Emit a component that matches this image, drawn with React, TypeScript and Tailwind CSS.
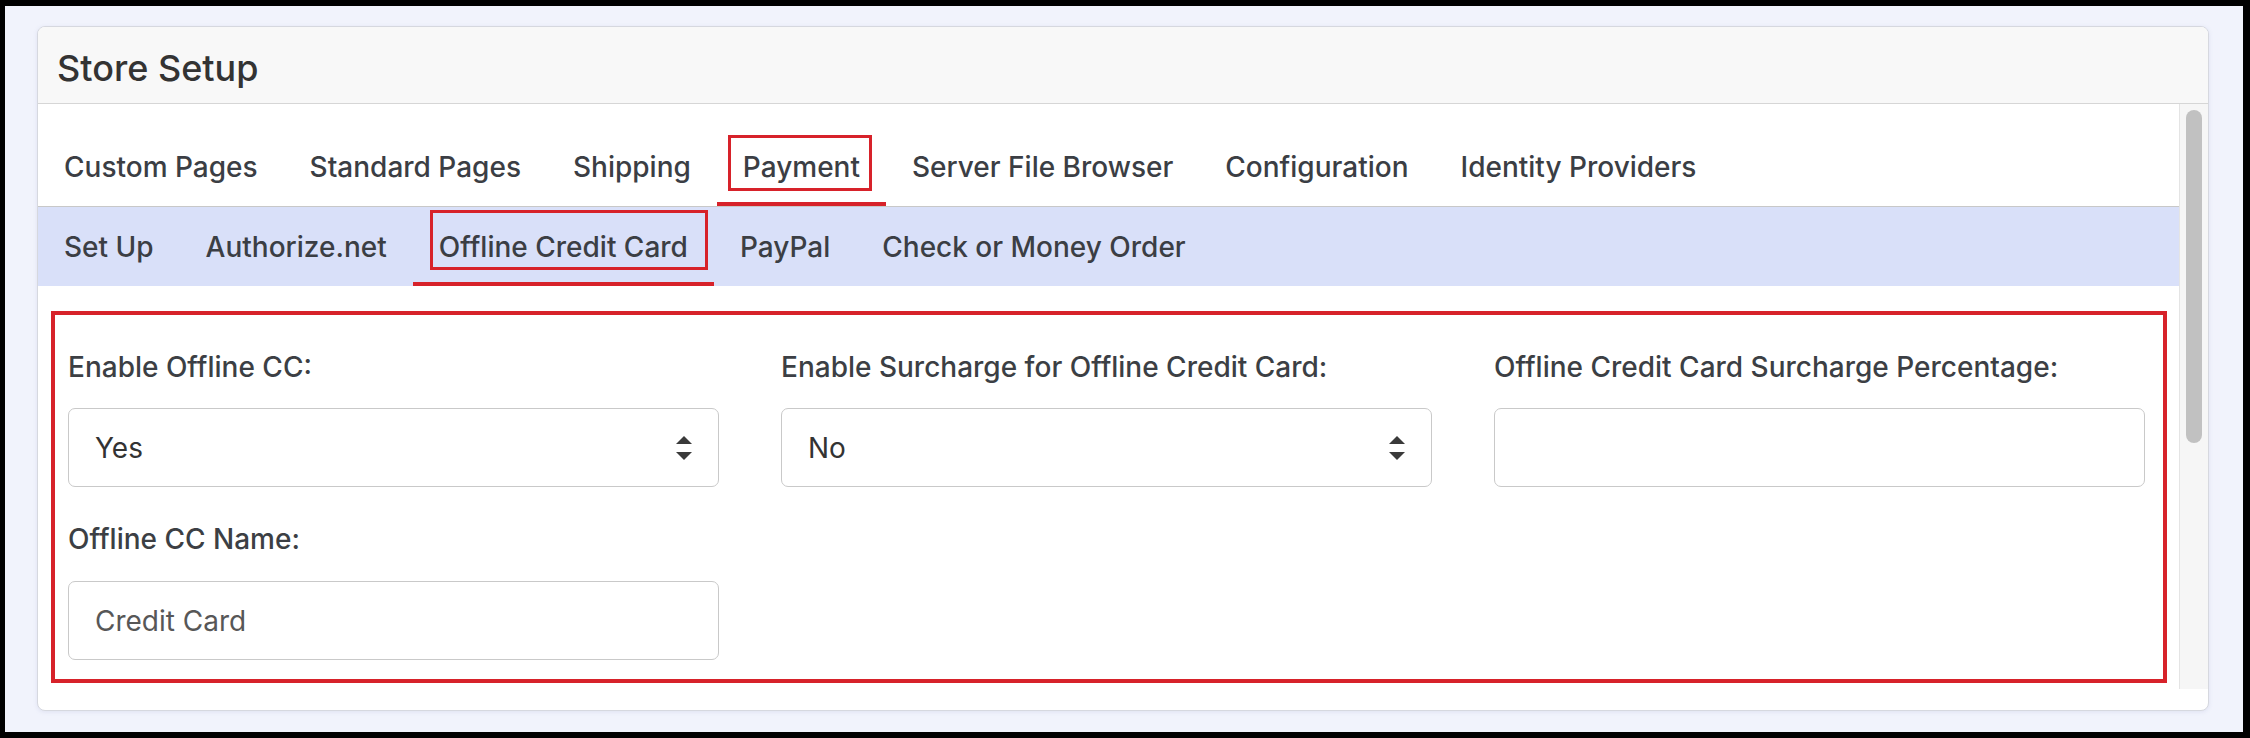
import React from 'react';

const mainTabs = ['Custom Pages', 'Standard Pages', 'Shipping', 'Payment', 'Server File Browser', 'Configuration', 'Identity Providers'];
const subTabs = ['Set Up', 'Authorize.net', 'Offline Credit Card', 'PayPal', 'Check or Money Order'];

function SelectArrows() {
  return (
    <svg width="16" height="24" viewBox="0 0 16 24" className="shrink-0">
      <polygon points="8,0 16,8 0,8" fill="#3a3a3a" />
      <polygon points="0,16 16,16 8,24" fill="#3a3a3a" />
    </svg>
  );
}

function Field({ label, children, gap = 'mb-[20px]' }: { label: string; children: React.ReactNode; gap?: string }) {
  return (
    <div className="flex flex-col">
      <label className={`text-[28px] leading-[42px] font-medium text-[#3c3f44] ${gap}`}>{label}</label>
      {children}
    </div>
  );
}

function SelectBox({ value }: { value: string }) {
  return (
    <div className="h-[79px] rounded-[7px] border border-[#c9c9c9] bg-white flex items-center justify-between pl-[26px] pr-[26px]">
      <span className="text-[28px] text-[#333]">{value}</span>
      <SelectArrows />
    </div>
  );
}

function InputBox({ value }: { value?: string }) {
  return (
    <div className="h-[79px] rounded-[7px] border border-[#c9c9c9] bg-white flex items-center pl-[26px]">
      <span className="text-[28px] text-[#575757]">{value}</span>
    </div>
  );
}

export default function App() {
  return (
    <div className="w-[2250px] h-[738px] bg-black flex pt-[6px] pl-[5px] pr-[7px] pb-[6px]" style={{ fontFamily: 'Inter, "Noto Sans", sans-serif' }}>
      <div className="flex-1 flex bg-[#f1f3fc] pl-[32px] pt-[20px] pr-[34px] pb-[21px]">
        <div className="flex-1 flex flex-col rounded-[8px] border border-[#d6d8df] bg-white overflow-hidden shadow-[0_1px_4px_rgba(120,130,180,0.15)]">
          {/* Header */}
          <div className="h-[77px] shrink-0 bg-[#f8f8f8] border-b border-[#d6d6d6] pl-[19px] pt-[20px]">
            <h1 className="text-[36px] leading-[43px] font-medium text-[#333]">Store Setup</h1>
          </div>

          <div className="flex-1 flex flex-col pb-[21px]">
            <div className="flex-1 flex min-h-0">
              <div className="flex-1 flex flex-col overflow-hidden">
                {/* Main tabs */}
                <div className="flex border-b border-[#c8c8c8] shrink-0">
                  {mainTabs.map((t) => (
                    <div
                      key={t}
                      className={`relative px-[26px] pt-[42px] pb-[14px] border-b-4 text-[28px] leading-[42px] font-medium text-[#3b3e44] whitespace-nowrap ${t === 'Payment' ? 'border-[#d7222a]' : 'border-transparent'}`}
                    >
                      {t}
                      {t === 'Payment' && (
                        <div className="absolute left-[11px] right-[14px] top-[31px] h-[56px] border-[3px] border-[#d7222a]" />
                      )}
                    </div>
                  ))}
                </div>

                {/* Sub tabs */}
                <div className="flex bg-[#d9e0f9] shrink-0">
                  {subTabs.map((t) => (
                    <div
                      key={t}
                      className={`relative px-[26px] pt-[19px] pb-[14px] border-b-4 text-[28px] leading-[42px] font-medium text-[#3b3e44] whitespace-nowrap ${t === 'Offline Credit Card' ? 'border-[#d7222a]' : 'border-transparent'}`}
                    >
                      {t}
                      {t === 'Offline Credit Card' && (
                        <div className="absolute left-[17px] right-[6px] top-[3px] h-[60px] border-[3px] border-[#d7222a]" />
                      )}
                    </div>
                  ))}
                </div>

                {/* Form */}
                <div className="pt-[25px] pl-[13px] pr-[12px]">
                  <div className="border-4 border-[#d7222a] pl-[13px] pr-[18px] pt-[31px] pb-[19px]">
                    <div className="grid grid-cols-3 gap-x-[62px] gap-y-[31px]">
                      <Field label="Enable Offline CC:">
                        <SelectBox value="Yes" />
                      </Field>
                      <Field label="Enable Surcharge for Offline Credit Card:">
                        <SelectBox value="No" />
                      </Field>
                      <Field label="Offline Credit Card Surcharge Percentage:">
                        <InputBox />
                      </Field>
                      <Field label="Offline CC Name:" gap="mb-[21px]">
                        <InputBox value="Credit Card" />
                      </Field>
                    </div>
                  </div>
                </div>
              </div>

              {/* Scrollbar */}
              <div className="w-[29px] shrink-0 bg-[#f6f6f6] border-l border-[#e4e4e4] flex justify-center pt-[6px]">
                <div className="w-[16px] h-[333px] rounded-full bg-[#c1c1c1]" />
              </div>
            </div>
          </div>
        </div>
      </div>
    </div>
  );
}
